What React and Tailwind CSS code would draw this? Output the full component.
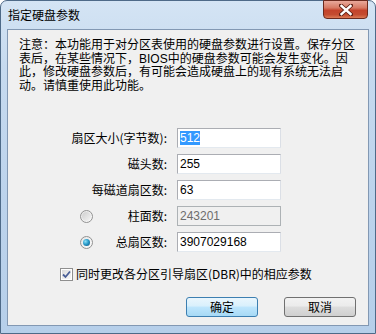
import React from "react";

const cjk = { fontFamily: '"Noto Sans CJK SC", "Noto Sans", sans-serif' };
const note = { fontFamily: '"Liberation Sans", "Noto Sans CJK SC", sans-serif' };
const num = { fontFamily: '"Liberation Sans", "DejaVu Sans", sans-serif' };

function Radio({ checked }) {
  return (
    <div className="w-[13px] h-[13px] rounded-full border border-[#929292] bg-gradient-to-br from-[#e6e6e6] to-[#fbfbfb] flex items-center justify-center shrink-0">
      {checked ? (
        <div className="w-[7px] h-[7px] rounded-full bg-[radial-gradient(circle_at_35%_35%,#8ee0f6_0%,#2a9ccb_45%,#0d4d78_100%)]" />
      ) : (
        <div className="w-[9px] h-[9px] rounded-full bg-gradient-to-br from-[#cfcfcf] to-[#f4f4f4]" />
      )}
    </div>
  );
}

function Check() {
  return (
    <div className="w-[13px] h-[13px] border border-[#8f8f8f] bg-white p-[1px] shrink-0">
      <div className="w-full h-full bg-gradient-to-br from-[#dcdcdc] to-[#f8f8f8] flex items-center justify-center">
        <svg width="9" height="9" viewBox="0 0 9 9">
          <path d="M1 4.5 L3.5 7 L8 1.5" fill="none" stroke="#4a5f97" strokeWidth="1.8" />
        </svg>
      </div>
    </div>
  );
}

function Field({ label, value, radio, disabled, selected }) {
  return (
    <div className="flex items-center h-[20px]">
      <div className="w-[159px] flex items-center">
        {radio !== undefined ? (
          <div className="ml-[72px]">
            <Radio checked={radio} />
          </div>
        ) : null}
        <div className="flex-1 text-right text-[12px] text-black leading-[20px]" style={cjk}>
          {label}
        </div>
      </div>
      <div
        className={
          "ml-[10px] w-[104px] h-[20px] border flex items-center pl-[2px] text-[12px] " +
          (disabled
            ? "bg-[#f0f0f0] border-[#adb2b5] text-[#6d6d6d]"
            : "bg-white border-[#abadb3] border-r-[#dbdfe6] border-b-[#e3e9ef] text-black")
        }
        style={num}
      >
        {selected ? (
          <span className="bg-[#3399ff] text-white leading-[14px] px-0">{value}</span>
        ) : (
          <span>{value}</span>
        )}
      </div>
    </div>
  );
}

function Button({ children, def }) {
  return (
    <div
      className={
        "w-[72px] h-[20px] rounded-[3px] border flex items-center justify-center text-[12px] text-black " +
        (def
          ? "border-[#3c7fb1] bg-[linear-gradient(to_bottom,#eaf6fd_0%,#d9f0fc_45%,#bee6fd_50%,#a7d9f5_100%)]"
          : "border-[#707070] bg-[linear-gradient(to_bottom,#f2f2f2_0%,#ebebeb_45%,#dddddd_50%,#cfcfcf_100%)]")
      }
      style={cjk}
    >
      {children}
    </div>
  );
}

export default function App() {
  return (
    <div className="w-[376px] h-[334px] relative overflow-hidden bg-white">
      <div className="w-[376px] h-[334px] rounded-t-[7px] border border-[#4e6a88] bg-[linear-gradient(to_bottom,#d4e4f4_0%,#c6daef_20%,#bcd3ec_60%,#b6cfea_100%)] flex flex-col">
        <div className="h-[28px] flex items-start justify-between">
          <div className="pl-[7px] pt-[6px] text-[12px] leading-[16px] text-black" style={cjk}>
            指定硬盘参数
          </div>
          <div className="mr-[7px] -mt-[1px] w-[45px] h-[19px] rounded-b-[4px] border border-[#6b2a1e] bg-[linear-gradient(to_bottom,#e9a99b_0%,#d77a64_40%,#c4432b_55%,#c44c30_80%,#dc7a55_100%)] flex items-center justify-center">
            <svg width="14" height="12" viewBox="0 0 14 12">
              <path d="M2 1.5 L12 10.5 M12 1.5 L2 10.5" stroke="#5a1d12" strokeWidth="4" strokeLinecap="square" />
              <path d="M2.5 2 L11.5 10 M11.5 2 L2.5 10" stroke="#ffffff" strokeWidth="2.4" strokeLinecap="square" />
            </svg>
          </div>
        </div>
        <div className="mx-[6px] h-[297px] border border-[#8298b3] bg-[#f0f0f0] flex flex-col">
          <div
            className="pl-[11px] pt-[9px] text-[12px] leading-[13.5px] text-black whitespace-nowrap"
            style={note}
          >
            <div>注意：本功能用于对分区表使用的硬盘参数进行设置。保存分区</div>
            <div>表后，在某些情况下，BIOS中的硬盘参数可能会发生变化。因</div>
            <div>此，修改硬盘参数后，有可能会造成硬盘上的现有系统无法启</div>
            <div>动。请慎重使用此功能。</div>
          </div>
          <div className="mt-[35px] flex flex-col gap-[6px]">
            <Field label="扇区大小(字节数):" value="512" selected />
            <Field label="磁头数:" value="255" />
            <Field label="每磁道扇区数:" value="63" />
            <Field label="柱面数:" value="243201" radio={false} disabled />
            <Field label="总扇区数:" value="3907029168" radio={true} />
          </div>
          <div className="mt-[15px] ml-[52px] flex items-center gap-[3px] h-[14px]">
            <Check />
            <span className="text-[12px] text-black" style={cjk}>
              同时更改各分区引导扇区(DBR)中的相应参数
            </span>
          </div>
          <div className="mt-[16px] flex pl-[178px] gap-[26px]">
            <Button def>确定</Button>
            <Button>取消</Button>
          </div>
        </div>
      </div>
    </div>
  );
}
